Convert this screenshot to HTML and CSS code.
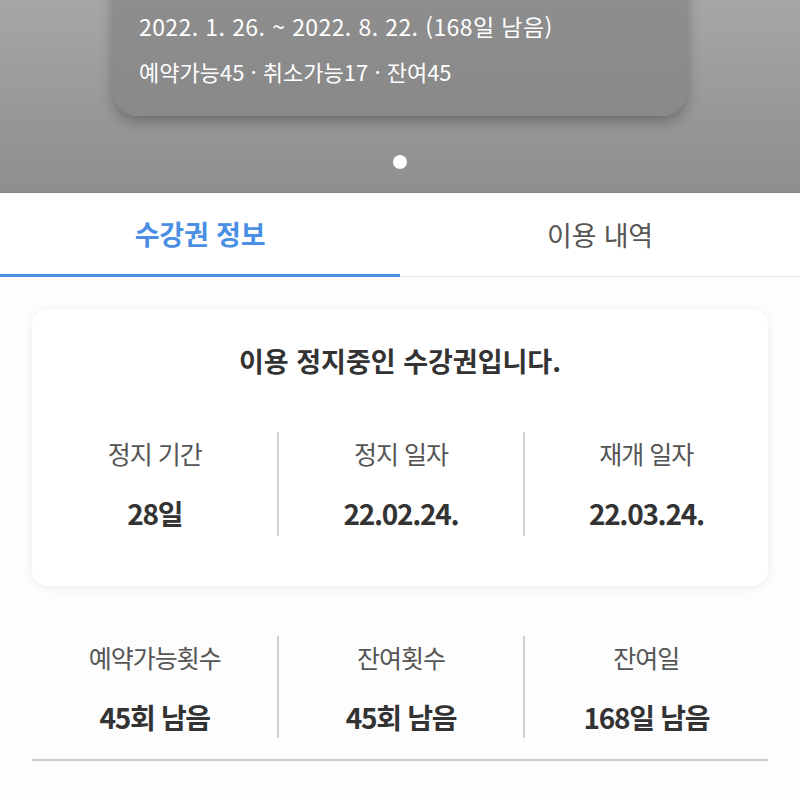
FILE: index.html
```html
<!DOCTYPE html>
<html lang="ko">
<head>
<meta charset="utf-8">
<link rel="stylesheet" href="styles.css">
</head>
<body>
<div class="hero">
  <div class="pass-card">
    <p class="period">2022. 1. 26. ~ 2022. 8. 22. (168일 남음)</p>
    <p class="counts">예약가능45 · 취소가능17 · 잔여45</p>
  </div>
  <div class="dots"><span class="dot"></span></div>
</div>
<div class="tabs">
  <div class="tab active">수강권 정보</div>
  <div class="tab">이용 내역</div>
</div>
<div class="content">
  <div class="pause-card">
    <h2 class="pause-title">이용 정지중인 수강권입니다.</h2>
    <div class="grid">
      <div class="cell"><div class="label">정지 기간</div><div class="value">28일</div></div>
      <div class="cell"><div class="label">정지 일자</div><div class="value">22.02.24.</div></div>
      <div class="cell"><div class="label">재개 일자</div><div class="value">22.03.24.</div></div>
    </div>
  </div>
  <div class="grid stats">
    <div class="cell"><div class="label">예약가능횟수</div><div class="value">45회 남음</div></div>
    <div class="cell"><div class="label">잔여횟수</div><div class="value">45회 남음</div></div>
    <div class="cell"><div class="label">잔여일</div><div class="value">168일 남음</div></div>
  </div>
</div>
</body>
</html>
```
FILE: styles.css
```css
* { box-sizing: border-box; }
html, body { margin: 0; padding: 0; }
body {
  width: 800px;
  height: 800px;
  overflow: hidden;
  background: #fdfdfd;
  font-family: "Noto Sans CJK KR", "Noto Sans", sans-serif;
  color: #333;
}
.hero {
  height: 193px;
  background: linear-gradient(180deg, #a6a6a6 0%, #8e8e8e 100%);
  display: flex;
  flex-direction: column;
  align-items: center;
  border-bottom: 1px solid #8a8a8a;
}
.pass-card {
  width: 574px;
  margin-top: -40px;
  height: 156px;
  background: linear-gradient(180deg, #8f8f8f, #898989);
  border-radius: 26px;
  box-shadow: 0 6px 14px rgba(0,0,0,0.28);
  padding: 50px 0 0 26px;
  color: #fff;
}
.period {
  margin: 0;
  font-size: 23px;
  line-height: 32px;
  letter-spacing: 0.4px;
}
.counts {
  margin: 14px 0 0;
  font-size: 22px;
  line-height: 30px;
  letter-spacing: 0;
}
.dots {
  margin-top: 39px;
  display: flex;
  justify-content: center;
}
.dot {
  width: 14px;
  height: 14px;
  border-radius: 50%;
  background: #fff;
}
.tabs {
  display: flex;
  height: 84px;
  background: #fff;
}
.tab {
  flex: 1;
  display: flex;
  align-items: center;
  justify-content: center;
  font-size: 27px;
  color: #555;
  border-bottom: 1px solid #e2e2e2;
  padding-bottom: 0;
  letter-spacing: -0.2px;
}
.tab.active {
  color: #4a8fe3;
  font-weight: 700;
  border-bottom: 3px solid #4a8fe3;
  padding-bottom: 0;
}
.content {
  padding: 32px 32px 0;
}
.pause-card {
  background: #fff;
  border-radius: 16px;
  box-shadow: 0 2px 10px rgba(0,0,0,0.07);
  padding: 34px 0 50px;
}
.pause-title {
  margin: 0;
  text-align: center;
  font-size: 27px;
  font-weight: 700;
  line-height: 36px;
  color: #333;
  letter-spacing: 0;
}
.grid {
  display: grid;
  grid-template-columns: repeat(3, 1fr);
}
.pause-card .grid { margin-top: 53px; }
.cell {
  display: flex;
  flex-direction: column;
  align-items: center;
  padding: 4px 0;
}
.cell + .cell { border-left: 2px solid #cfcfcf; }
.label {
  font-size: 25px;
  line-height: 34px;
  color: #555;
  letter-spacing: -1px;
}
.value {
  margin-top: 24px;
  font-size: 28px;
  line-height: 38px;
  font-weight: 700;
  color: #333;
  letter-spacing: -1.3px;
}
.stats {
  margin-top: 50px;
  padding-bottom: 21px;
  border-bottom: 2px solid #cbcbcb;
}
.stats .cell { padding: 4px 0 2px; }
```
